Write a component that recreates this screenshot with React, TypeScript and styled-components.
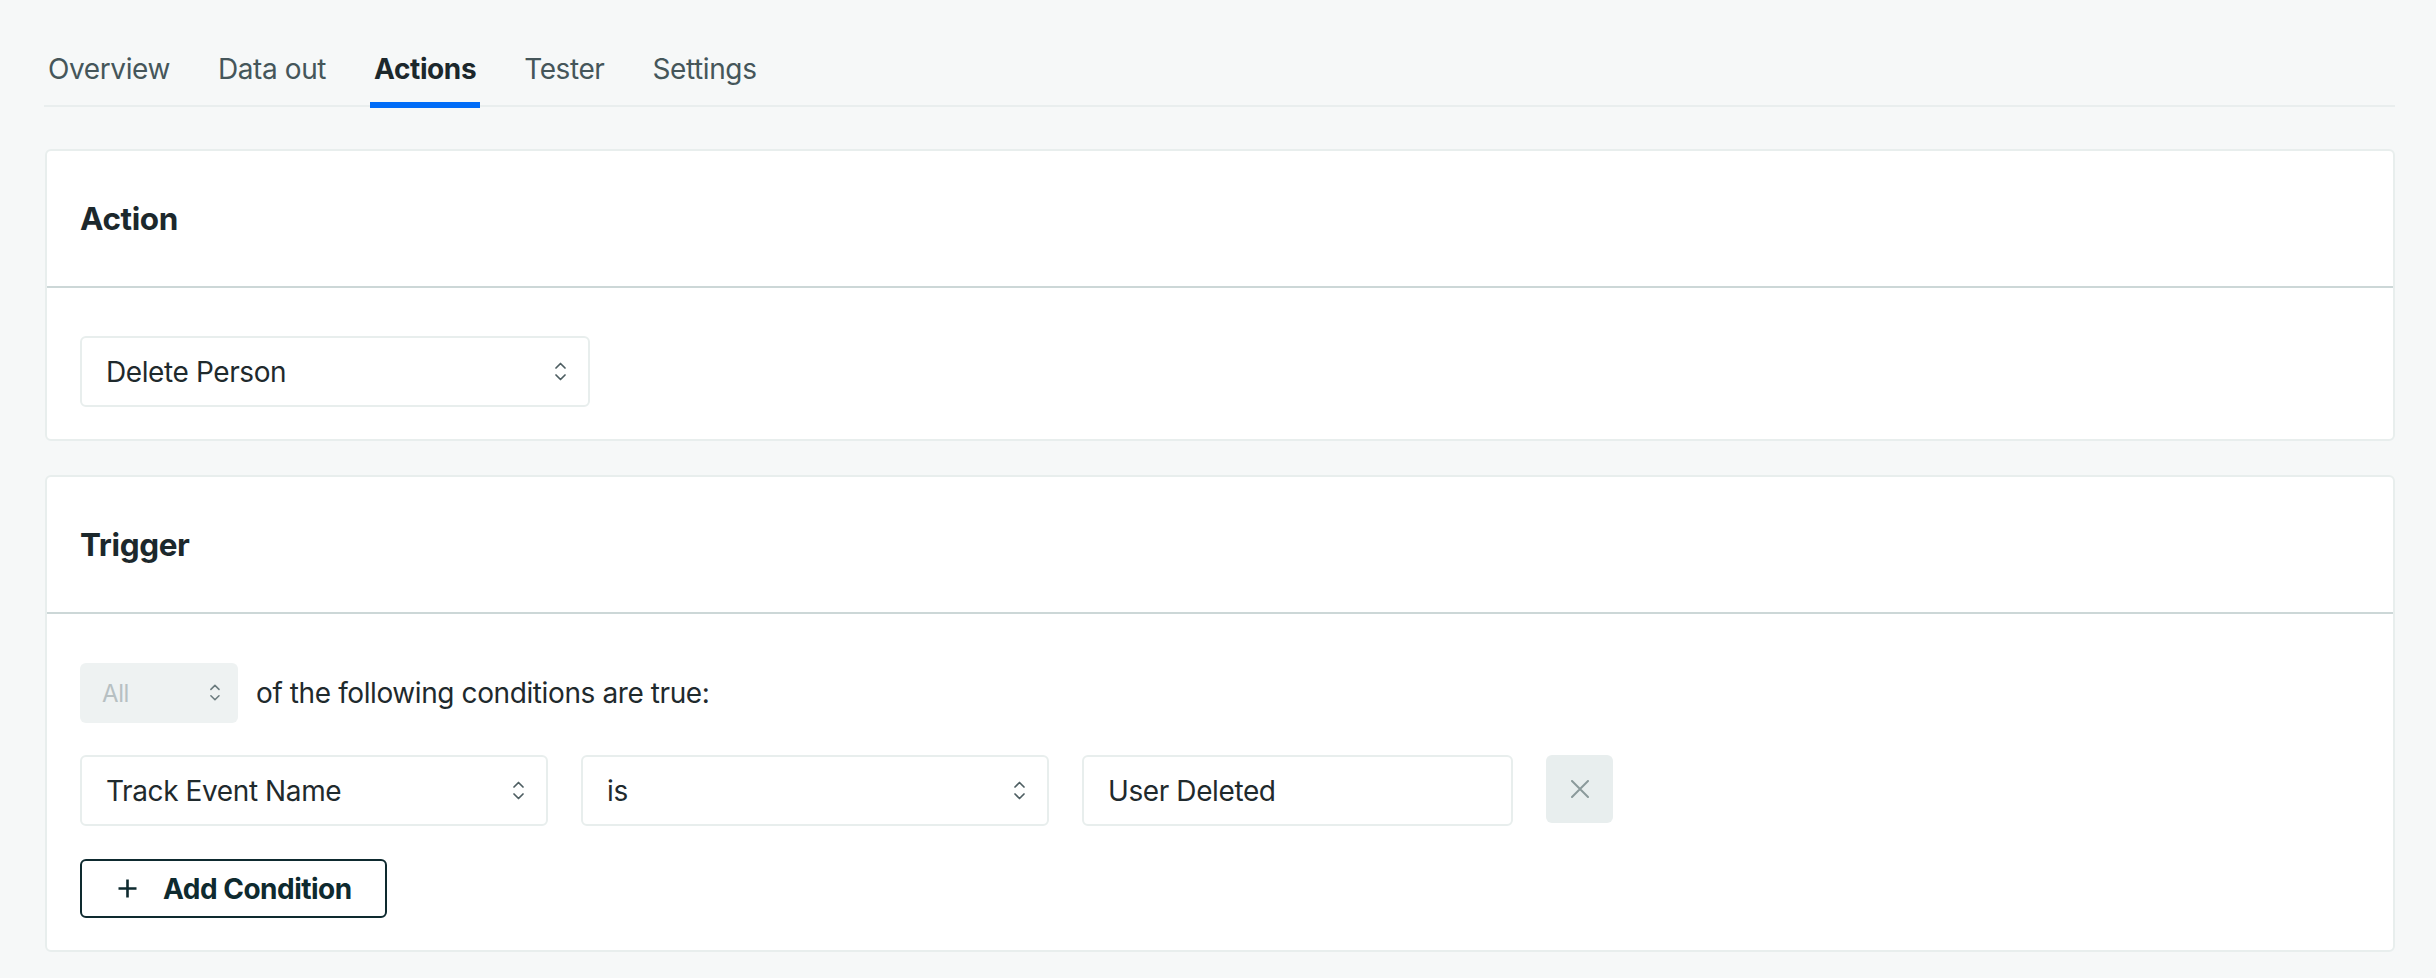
import React from "react";
import styled, { createGlobalStyle } from "styled-components";

const GlobalStyle = createGlobalStyle`
  html, body {
    margin: 0;
    padding: 0;
    background: #f6f8f8;
  }
  body {
    font-family: Inter, "Noto Sans", "Liberation Sans", sans-serif;
    letter-spacing: -0.4px;
    color: #1f2a2d;
  }
  * {
    box-sizing: border-box;
  }
`;

const Page = styled.div`
  padding: 0 41px 24px 44px;
`;

const TabBar = styled.nav`
  display: flex;
  gap: 40px;
  padding-top: 49px;
  border-bottom: 2px solid #e9eeee;
`;

const Tab = styled.div<{ $active?: boolean }>`
  position: relative;
  padding: 0 4px 16px;
  font-size: 28px;
  line-height: 40px;
  font-weight: ${(p) => (p.$active ? 700 : 400)};
  color: ${(p) => (p.$active ? "#1c282c" : "#45565a")};

  ${(p) =>
    p.$active &&
    `
    &::after {
      content: "";
      position: absolute;
      left: 0;
      right: 0;
      bottom: -3px;
      height: 6px;
      background: #006cf7;
    }
  `}
`;

const Card = styled.section<{ $top: number }>`
  margin-top: ${(p) => p.$top}px;
  margin-left: 1px;
  background: #fff;
  border: 2px solid #e8eeed;
  border-radius: 6px;
`;

const CardHeader = styled.header`
  display: flex;
  align-items: center;
  height: 137px;
  padding: 0 33px;
  border-bottom: 2px solid #ccd7d7;
`;

const CardTitle = styled.h2`
  margin: 0;
  font-size: 31.5px;
  font-weight: 700;
  color: #1c282c;
`;

const CardBody = styled.div<{ $top: number }>`
  display: flex;
  flex-direction: column;
  align-items: flex-start;
  padding: ${(p) => p.$top}px 33px 32px;
`;

const Select = styled.div<{ $width: number }>`
  display: flex;
  align-items: center;
  justify-content: space-between;
  width: ${(p) => p.$width}px;
  height: 71px;
  padding: 0 22px 0 24px;
  border: 2px solid #e8eeed;
  border-radius: 6px;
  background: #fff;
  font-size: 28px;
  color: #1f2a2d;
`;

const MatchSelect = styled.div`
  display: flex;
  align-items: center;
  justify-content: space-between;
  width: 158px;
  height: 60px;
  padding: 0 18px 0 22px;
  border-radius: 6px;
  background: #eef2f2;
  font-size: 24px;
  color: #b7c0c2;
`;

const MatchLine = styled.div`
  display: flex;
  align-items: center;
  gap: 18px;
  font-size: 28px;
  color: #1f2a2d;
`;

const ConditionRow = styled.div`
  display: flex;
  align-items: flex-start;
  gap: 33px;
  margin-top: 32px;
`;

const TextField = styled.div`
  display: flex;
  align-items: center;
  width: 431px;
  height: 71px;
  padding: 0 24px;
  border: 2px solid #e8eeed;
  border-radius: 6px;
  font-size: 28px;
  color: #1f2a2d;
`;

const RemoveButton = styled.button`
  display: flex;
  align-items: center;
  justify-content: center;
  width: 67px;
  height: 68px;
  padding: 0;
  border: none;
  border-radius: 6px;
  background: #e8eeee;
  color: #8b9a9b;
`;

const AddButton = styled.button`
  display: flex;
  align-items: center;
  gap: 26px;
  height: 59px;
  margin-top: 33px;
  padding: 0 33px 0 36px;
  border: 2px solid #0e2a2f;
  border-radius: 6px;
  background: #fff;
  font-family: inherit;
  font-size: 28px;
  font-weight: 700;
  letter-spacing: -0.5px;
  color: #0e2a2f;
`;

const Chevrons = ({ color = "#4e5e62", size = 1 }: { color?: string; size?: number }) => (
  <svg width={11 * size} height={19 * size} viewBox="0 0 11 19" fill="none">
    <path d="M1 6 L5.5 1.5 L10 6" stroke={color} strokeWidth="1.7" strokeLinecap="round" strokeLinejoin="round" />
    <path d="M1 13 L5.5 17.5 L10 13" stroke={color} strokeWidth="1.7" strokeLinecap="round" strokeLinejoin="round" />
  </svg>
);

const CloseIcon = () => (
  <svg width="18" height="18" viewBox="0 0 18 18" fill="none">
    <path d="M1 1 L17 17 M17 1 L1 17" stroke="currentColor" strokeWidth="2" strokeLinecap="round" />
  </svg>
);

const PlusIcon = () => (
  <svg width="19" height="19" viewBox="0 0 19 19" fill="none">
    <path d="M9.5 0.5 V18.5 M0.5 9.5 H18.5" stroke="currentColor" strokeWidth="2.6" />
  </svg>
);

const tabs = ["Overview", "Data out", "Actions", "Tester", "Settings"];

const App = () => {
  return (
    <Page>
      <GlobalStyle />
      <TabBar>
        {tabs.map((t) => (
          <Tab key={t} $active={t === "Actions"}>
            {t}
          </Tab>
        ))}
      </TabBar>

      <Card $top={42}>
        <CardHeader>
          <CardTitle>Action</CardTitle>
        </CardHeader>
        <CardBody $top={48}>
          <Select $width={510}>
            <span>Delete Person</span>
            <Chevrons />
          </Select>
        </CardBody>
      </Card>

      <Card $top={34}>
        <CardHeader>
          <CardTitle>Trigger</CardTitle>
        </CardHeader>
        <CardBody $top={49}>
          <MatchLine>
            <MatchSelect>
              <span>All</span>
              <Chevrons color="#6b7b7e" size={0.9} />
            </MatchSelect>
            <span>of the following conditions are true:</span>
          </MatchLine>

          <ConditionRow>
            <Select $width={468}>
              <span>Track Event Name</span>
              <Chevrons />
            </Select>
            <Select $width={468}>
              <span>is</span>
              <Chevrons />
            </Select>
            <TextField>User Deleted</TextField>
            <RemoveButton aria-label="Remove condition">
              <CloseIcon />
            </RemoveButton>
          </ConditionRow>

          <AddButton>
            <PlusIcon />
            <span>Add Condition</span>
          </AddButton>
        </CardBody>
      </Card>
    </Page>
  );
};

export default App;
